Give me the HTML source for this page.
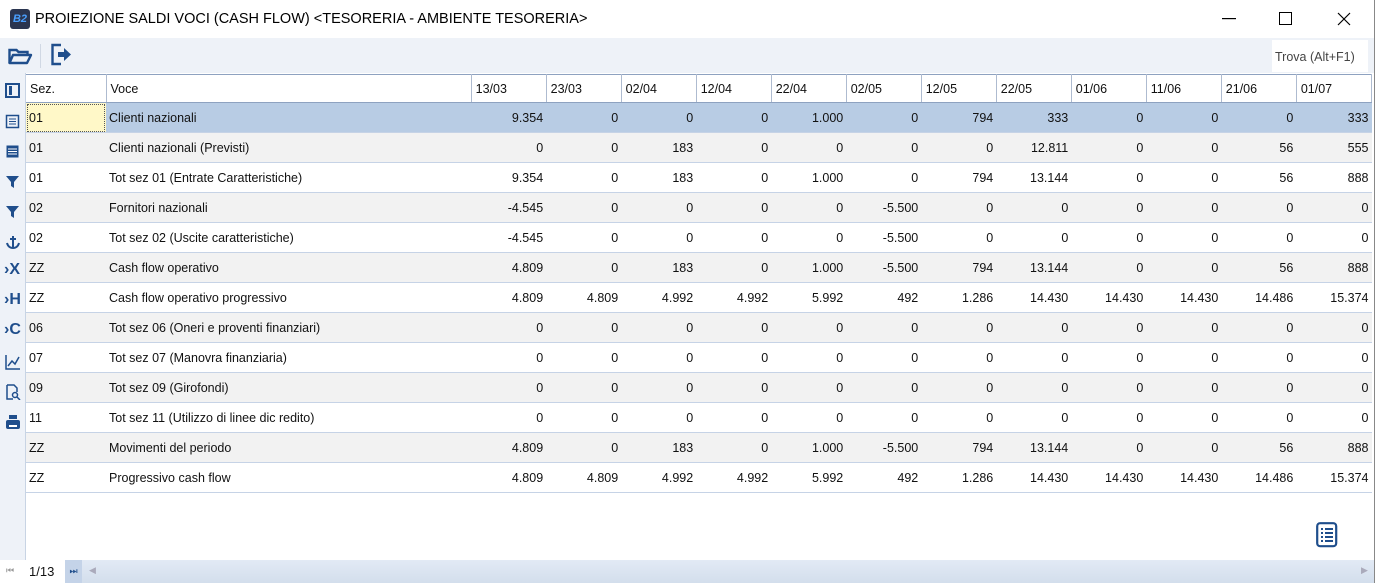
<!DOCTYPE html>
<html><head><style>
*{margin:0;padding:0;box-sizing:border-box}
body{width:1375px;height:583px;overflow:hidden;background:#fff;font-family:"Liberation Sans","DejaVu Sans",sans-serif;font-size:12.5px;color:#111;position:relative}
.title{position:absolute;left:0;top:0;width:1375px;height:38px;background:#fff}
.title .t{position:absolute;left:35px;top:11px;font-size:14.5px;color:#000}
.logo{position:absolute;left:10px;top:9px;width:20px;height:20px;background:#2a3550;border-radius:3px;color:#4aa0ff;font-size:11px;font-weight:bold;text-align:center;line-height:20px;font-style:italic}
.tb{position:absolute;left:0;top:38px;width:1375px;height:35px;background:#eef2f8}
.trova{position:absolute;left:1272px;top:40px;width:96px;height:32px;background:#fff;color:#444;font-size:12.5px;line-height:34px;padding-left:3px}
.side{position:absolute;left:0;top:73px;width:26px;height:487px;background:#eef2f8;border-right:1px solid #c8d4e4}
.side svg{position:absolute;left:5px}
table{position:absolute;left:26px;top:74px;border-collapse:collapse;table-layout:fixed;width:1346px}
td{height:30px;padding:0 3px;white-space:nowrap;overflow:hidden;border-bottom:1px solid #c6d3e6}
th{height:28px;font-weight:normal;text-align:left;padding:0 4px;border-right:1px solid #aebbd0;border-bottom:1px solid #8ea2c0;border-top:1px solid #8ea2c0;background:#fff}
td.n{text-align:right}
tr.g td{background:#f2f2f2}
tr.s td{background:#b8cce4}
tr.s td.y{background:#fff8c8;outline:1px dotted #555;outline-offset:-2px}
.bot{position:absolute;left:0;top:560px;width:1375px;height:23px;background:linear-gradient(#e2eaf5,#d3deec)}
.rb{position:absolute;right:0;top:0;width:1px;height:583px;background:#888}
</style></head><body>
<div class="title"><div class="logo">B2</div><div class="t">PROIEZIONE SALDI VOCI (CASH FLOW) &lt;TESORERIA - AMBIENTE TESORERIA&gt;</div>
<svg style="position:absolute;left:1222px;top:18px" width="14" height="2"><rect width="14" height="1.2" fill="#000"/></svg>
<svg style="position:absolute;left:1279px;top:12px" width="14" height="14"><rect x=".5" y=".5" width="12" height="12" fill="none" stroke="#000"/></svg>
<svg style="position:absolute;left:1337px;top:12px" width="14" height="14"><path d="M1 1L13 13M13 1L1 13" stroke="#000" stroke-width="1.2"/></svg>
</div>
<div class="tb">
<svg style="position:absolute;left:8px;top:9px" width="25" height="18"><path d="M1.5 16V3h7l2 2h9v3" fill="none" stroke="#1f4e8c" stroke-width="2.4"/><path d="M1.5 16L5 8h18l-4 8z" fill="none" stroke="#1f4e8c" stroke-width="2.4" stroke-linejoin="round"/></svg>
<div style="position:absolute;left:40px;top:6px;width:1px;height:24px;background:#d0d8e4"></div>
<svg style="position:absolute;left:50px;top:5px" width="24" height="24"><path d="M11 2H2.5v19H11" fill="none" stroke="#1f4e8c" stroke-width="2.4"/><path d="M8 9h6V5l7 6.5-7 6.5v-4H8z" fill="#1f4e8c"/></svg>
</div>
<div class="trova">Trova (Alt+F1)</div>
<div class="side">
<svg style="top:10px" width="16" height="16"><rect x="1" y="1" width="13" height="13" fill="none" stroke="#1f4e8c" stroke-width="2"/><rect x="4" y="3" width="3" height="9" fill="#1f4e8c"/></svg>
<svg style="top:41px" width="16" height="16"><rect x="1.5" y="1.5" width="12" height="12" fill="none" stroke="#1f4e8c" stroke-width="1.5"/><path d="M4 5h7M4 7.5h7M4 10h7" stroke="#1f4e8c"/></svg>
<svg style="top:71px" width="16" height="16"><rect x="1.5" y="1.5" width="12" height="12" fill="#1f4e8c"/><path d="M3 5h9M3 7.5h9M3 10h9" stroke="#fff"/></svg>
<svg style="top:101px" width="16" height="16"><path d="M1 2h13L9 8v6L6 12V8z" fill="#1f4e8c"/></svg>
<svg style="top:131px" width="16" height="16"><path d="M1 2h13L9 8v6L6 12V8z" fill="#1f4e8c"/></svg>
<svg style="top:161px" width="16" height="16"><path d="M8 2v12M5 5h6M2 9c1 4 4 5 6 5s5-1 6-5" fill="none" stroke="#1f4e8c" stroke-width="2"/></svg>
<div style="position:absolute;left:4px;top:188px;color:#1f4e8c;font-weight:bold;font-size:16px">›X</div>
<div style="position:absolute;left:4px;top:218px;color:#1f4e8c;font-weight:bold;font-size:16px">›H</div>
<div style="position:absolute;left:4px;top:248px;color:#1f4e8c;font-weight:bold;font-size:16px">›C</div>
<svg style="top:281px" width="16" height="16"><path d="M1 1v14h14M3 12l4-5 3 3 4-7" fill="none" stroke="#1f4e8c" stroke-width="1.5"/></svg>
<svg style="top:311px" width="16" height="16"><path d="M2 1h7l3 3v4M2 1v14h6" fill="none" stroke="#1f4e8c" stroke-width="1.5"/><circle cx="10" cy="11" r="2.5" fill="none" stroke="#1f4e8c" stroke-width="1.5"/><path d="M12 13l3 3" stroke="#1f4e8c" stroke-width="1.5"/></svg>
<svg style="top:341px" width="16" height="16"><rect x="4" y="1" width="8" height="4" fill="#1f4e8c"/><rect x="1" y="6" width="14" height="9" rx="2" fill="#1f4e8c"/><rect x="4" y="11" width="8" height="2" fill="#fff"/></svg>
</div>
<table>
<colgroup><col style="width:80px"><col style="width:365px"><col span="12" style="width:75px"></colgroup>
<tr><th>Sez.</th><th>Voce</th><th>13/03</th><th>23/03</th><th>02/04</th><th>12/04</th><th>22/04</th><th>02/05</th><th>12/05</th><th>22/05</th><th>01/06</th><th>11/06</th><th>21/06</th><th>01/07</th></tr>
<tr class="s"><td class="y">01</td><td>Clienti nazionali</td><td class="n">9.354</td><td class="n">0</td><td class="n">0</td><td class="n">0</td><td class="n">1.000</td><td class="n">0</td><td class="n">794</td><td class="n">333</td><td class="n">0</td><td class="n">0</td><td class="n">0</td><td class="n">333</td></tr>
<tr class="g"><td>01</td><td>Clienti nazionali (Previsti)</td><td class="n">0</td><td class="n">0</td><td class="n">183</td><td class="n">0</td><td class="n">0</td><td class="n">0</td><td class="n">0</td><td class="n">12.811</td><td class="n">0</td><td class="n">0</td><td class="n">56</td><td class="n">555</td></tr>
<tr><td>01</td><td>Tot sez 01 (Entrate Caratteristiche)</td><td class="n">9.354</td><td class="n">0</td><td class="n">183</td><td class="n">0</td><td class="n">1.000</td><td class="n">0</td><td class="n">794</td><td class="n">13.144</td><td class="n">0</td><td class="n">0</td><td class="n">56</td><td class="n">888</td></tr>
<tr class="g"><td>02</td><td>Fornitori nazionali</td><td class="n">-4.545</td><td class="n">0</td><td class="n">0</td><td class="n">0</td><td class="n">0</td><td class="n">-5.500</td><td class="n">0</td><td class="n">0</td><td class="n">0</td><td class="n">0</td><td class="n">0</td><td class="n">0</td></tr>
<tr><td>02</td><td>Tot sez 02 (Uscite caratteristiche)</td><td class="n">-4.545</td><td class="n">0</td><td class="n">0</td><td class="n">0</td><td class="n">0</td><td class="n">-5.500</td><td class="n">0</td><td class="n">0</td><td class="n">0</td><td class="n">0</td><td class="n">0</td><td class="n">0</td></tr>
<tr class="g"><td>ZZ</td><td>Cash flow operativo</td><td class="n">4.809</td><td class="n">0</td><td class="n">183</td><td class="n">0</td><td class="n">1.000</td><td class="n">-5.500</td><td class="n">794</td><td class="n">13.144</td><td class="n">0</td><td class="n">0</td><td class="n">56</td><td class="n">888</td></tr>
<tr><td>ZZ</td><td>Cash flow operativo progressivo</td><td class="n">4.809</td><td class="n">4.809</td><td class="n">4.992</td><td class="n">4.992</td><td class="n">5.992</td><td class="n">492</td><td class="n">1.286</td><td class="n">14.430</td><td class="n">14.430</td><td class="n">14.430</td><td class="n">14.486</td><td class="n">15.374</td></tr>
<tr class="g"><td>06</td><td>Tot sez 06 (Oneri e proventi finanziari)</td><td class="n">0</td><td class="n">0</td><td class="n">0</td><td class="n">0</td><td class="n">0</td><td class="n">0</td><td class="n">0</td><td class="n">0</td><td class="n">0</td><td class="n">0</td><td class="n">0</td><td class="n">0</td></tr>
<tr><td>07</td><td>Tot sez 07 (Manovra finanziaria)</td><td class="n">0</td><td class="n">0</td><td class="n">0</td><td class="n">0</td><td class="n">0</td><td class="n">0</td><td class="n">0</td><td class="n">0</td><td class="n">0</td><td class="n">0</td><td class="n">0</td><td class="n">0</td></tr>
<tr class="g"><td>09</td><td>Tot sez 09 (Girofondi)</td><td class="n">0</td><td class="n">0</td><td class="n">0</td><td class="n">0</td><td class="n">0</td><td class="n">0</td><td class="n">0</td><td class="n">0</td><td class="n">0</td><td class="n">0</td><td class="n">0</td><td class="n">0</td></tr>
<tr><td>11</td><td>Tot sez 11 (Utilizzo di linee dic redito)</td><td class="n">0</td><td class="n">0</td><td class="n">0</td><td class="n">0</td><td class="n">0</td><td class="n">0</td><td class="n">0</td><td class="n">0</td><td class="n">0</td><td class="n">0</td><td class="n">0</td><td class="n">0</td></tr>
<tr class="g"><td>ZZ</td><td>Movimenti del periodo</td><td class="n">4.809</td><td class="n">0</td><td class="n">183</td><td class="n">0</td><td class="n">1.000</td><td class="n">-5.500</td><td class="n">794</td><td class="n">13.144</td><td class="n">0</td><td class="n">0</td><td class="n">56</td><td class="n">888</td></tr>
<tr><td>ZZ</td><td>Progressivo cash flow</td><td class="n">4.809</td><td class="n">4.809</td><td class="n">4.992</td><td class="n">4.992</td><td class="n">5.992</td><td class="n">492</td><td class="n">1.286</td><td class="n">14.430</td><td class="n">14.430</td><td class="n">14.430</td><td class="n">14.486</td><td class="n">15.374</td></tr>
</table>
<svg style="position:absolute;left:1316px;top:522px" width="22" height="26"><rect x="1.2" y="1.2" width="19" height="23" rx="3" fill="none" stroke="#1f4e8c" stroke-width="2.2"/><path d="M5 7h2M9 7h8M5 11h2M9 11h8M5 15h2M9 15h8M5 19h2M9 19h8" stroke="#1f4e8c" stroke-width="2"/></svg>
<div class="bot">
<div style="position:absolute;left:0;top:0;width:65px;height:23px;background:#fff"></div>
<div style="position:absolute;left:6px;top:5px;font-size:9px;color:#999">⏮</div>
<div style="position:absolute;left:29px;top:4px;font-size:13px">1/13</div>
<div style="position:absolute;left:65px;top:0;width:17px;height:23px;background:#c4d3e8;font-size:9px;color:#1f4e8c;line-height:22px;text-align:center">⏭</div>
<div style="position:absolute;left:89px;top:5px;font-size:9px;color:#aab">◀</div>
<div style="position:absolute;left:1361px;top:5px;font-size:9px;color:#aab">▶</div>
</div>
<div class="rb"></div>
</body></html>
